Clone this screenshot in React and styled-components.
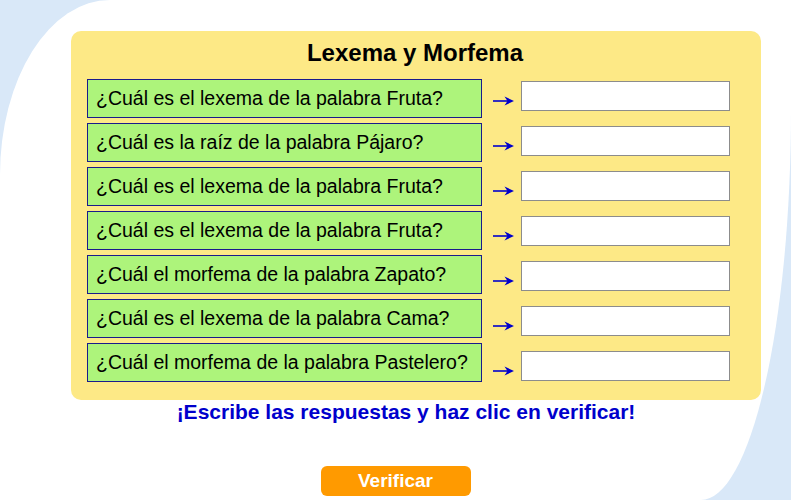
import React from 'react';
import styled, { createGlobalStyle } from 'styled-components';

const GlobalStyle = createGlobalStyle`
  html, body {
    margin: 0;
    padding: 0;
    background: #d9e8f8;
    font-family: "Liberation Sans", Arial, sans-serif;
  }
`;

const Page = styled.div`
  width: 791px;
  height: 500px;
  box-sizing: border-box;
  padding-top: 31px;
  background: #ffffff;
  border-top-left-radius: 110px 175px;
  border-bottom-right-radius: 90px 390px;
  overflow: hidden;
`;

const Panel = styled.div`
  width: 690px;
  margin-left: 71px;
  box-sizing: border-box;
  padding: 0 31px 18px 16px;
  background: #fde986;
  border-radius: 10px;
`;

const Title = styled.h1`
  margin: 0 0 4px;
  padding-left: 13px;
  height: 44px;
  line-height: 44px;
  text-align: center;
  font-size: 24px;
  font-weight: 700;
  color: #000;
`;

// questions, arrows and answer boxes sit in three stacked columns
const Exercise = styled.div`
  display: grid;
  grid-template-columns: 395px 39px 209px;
  align-items: start;
`;

const Column = styled.div`
  display: flex;
  flex-direction: column;
  gap: ${p => p.$gap}px;
  padding-top: ${p => p.$top || 0}px;
`;

const Question = styled.div`
  height: 39px;
  box-sizing: border-box;
  display: flex;
  align-items: center;
  padding: 0 8px;
  background: #adf47b;
  border: 1px solid #1a1a8c;
  font-size: 19.5px;
  color: #000;
  white-space: nowrap;
`;

const ArrowCell = styled.div`
  height: 10px;
  padding-left: 11px;
  color: #0000cc;
  line-height: 0;
`;

const AnswerInput = styled.input`
  width: 209px;
  height: 30px;
  box-sizing: border-box;
  border: 1px solid #8c8c8c;
  background: #fff;
  padding: 2px 4px;
  font-family: inherit;
  font-size: 16px;
  outline: none;
`;

const Instruction = styled.p`
  margin: 0;
  padding-left: 21px;
  line-height: 24px;
  text-align: center;
  font-size: 21px;
  font-weight: 700;
  color: #0000cc;
`;

const VerifyButton = styled.button`
  display: block;
  margin: 42px auto 0;
  width: 150px;
  height: 30px;
  border: none;
  border-radius: 6px;
  background: #ff9a00;
  color: #fff;
  font-family: inherit;
  font-size: 19px;
  font-weight: 700;
  cursor: pointer;
`;

const Arrow = () => (
  <svg width="21" height="10" viewBox="0 0 21 10">
    <line x1="0" y1="5" x2="15" y2="5" stroke="currentColor" strokeWidth="1.6" />
    <path d="M11.5 0.5 L21 5 L11.5 9.5 L14.5 5 Z" fill="currentColor" />
  </svg>
);

const questions = [
  '¿Cuál es el lexema de la palabra Fruta?',
  '¿Cuál es la raíz de la palabra Pájaro?',
  '¿Cuál es el lexema de la palabra Fruta?',
  '¿Cuál es el lexema de la palabra Fruta?',
  '¿Cuál el morfema de la palabra Zapato?',
  '¿Cuál es el lexema de la palabra Cama?',
  '¿Cuál el morfema de la palabra Pastelero?',
];

export default function App() {
  return (
    <>
      <GlobalStyle />
      <Page>
        <Panel>
          <Title>Lexema y Morfema</Title>
          <Exercise>
            <Column $gap={5}>
              {questions.map((q, i) => (
                <Question key={i}>{q}</Question>
              ))}
            </Column>
            <Column $gap={35} $top={17}>
              {questions.map((q, i) => (
                <ArrowCell key={i}>
                  <Arrow />
                </ArrowCell>
              ))}
            </Column>
            <Column $gap={15} $top={2}>
              {questions.map((q, i) => (
                <AnswerInput key={i} type="text" aria-label={q} />
              ))}
            </Column>
          </Exercise>
        </Panel>
        <Instruction>¡Escribe las respuestas y haz clic en verificar!</Instruction>
        <VerifyButton type="button">Verificar</VerifyButton>
      </Page>
    </>
  );
}
